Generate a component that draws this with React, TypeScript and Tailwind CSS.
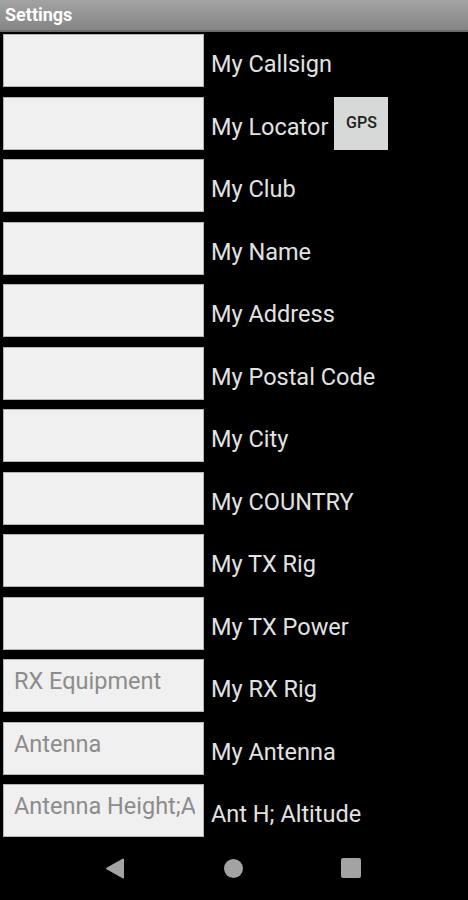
const fields: { label: string; placeholder?: string; gps?: boolean }[] = [
  { label: 'My Callsign' },
  { label: 'My Locator', gps: true },
  { label: 'My Club' },
  { label: 'My Name' },
  { label: 'My Address' },
  { label: 'My Postal Code' },
  { label: 'My City' },
  { label: 'My COUNTRY' },
  { label: 'My TX Rig' },
  { label: 'My TX Power' },
  { label: 'My RX Rig', placeholder: 'RX Equipment' },
  { label: 'My Antenna', placeholder: 'Antenna' },
  { label: 'Ant H; Altitude', placeholder: 'Antenna Height;Altitude' },
];

function SettingRow({ label, placeholder, gps }: { label: string; placeholder?: string; gps?: boolean }) {
  return (
    <div className="flex items-center h-[53px]">
      <input
        type="text"
        placeholder={placeholder}
        className="w-[201px] h-[53px] flex-shrink-0 bg-[#f0f0f0] border border-[#b5b5b5] pl-[10px] pr-[8px] pb-[9px] text-[23.5px] text-[#333] placeholder:text-[#8c8c8c] outline-none"
      />
      <div className="ml-[7px] pt-[7px] text-[23.5px] leading-[28px] text-[#e2e2e2] whitespace-nowrap">{label}</div>
      {gps && (
        <button className="ml-[6px] w-[54px] h-[53px] bg-[#d7d8d8] text-[#1e1e1e] text-[16px] font-medium flex items-center justify-center">
          GPS
        </button>
      )}
    </div>
  );
}

export default function App() {
  return (
    <div className="w-[468px] h-[900px] bg-black flex flex-col font-['Roboto',sans-serif] overflow-hidden">
      <div className="h-[32px] bg-gradient-to-b from-[#a3a3a3] to-[#858585] border-b-2 border-[#6c6c6c] flex items-center px-[5px]">
        <span className="text-white font-bold text-[18px] leading-none">Settings</span>
      </div>
      <div className="flex flex-col gap-[9.5px] pl-[3px] pt-[2px]">
        {fields.map((f) => (
          <SettingRow key={f.label} {...f} />
        ))}
      </div>
      <div className="mt-auto h-[60px] flex items-center pb-[4px]">
        <div className="flex items-center w-full">
          <svg className="ml-[105px]" width="20" height="21" viewBox="0 0 20 21">
            <path d="M19 1.5 L19 19.5 Q19 21 17.6 20.2 L1.5 11.3 Q0.4 10.5 1.5 9.7 L17.6 0.8 Q19 0 19 1.5Z" fill="#a3a3a3" />
          </svg>
          <div className="ml-[99px] w-[19px] h-[19px] rounded-full bg-[#a3a3a3]" />
          <div className="ml-[98px] w-[20px] h-[20px] rounded-[2px] bg-[#a3a3a3]" />
        </div>
      </div>
    </div>
  );
}
